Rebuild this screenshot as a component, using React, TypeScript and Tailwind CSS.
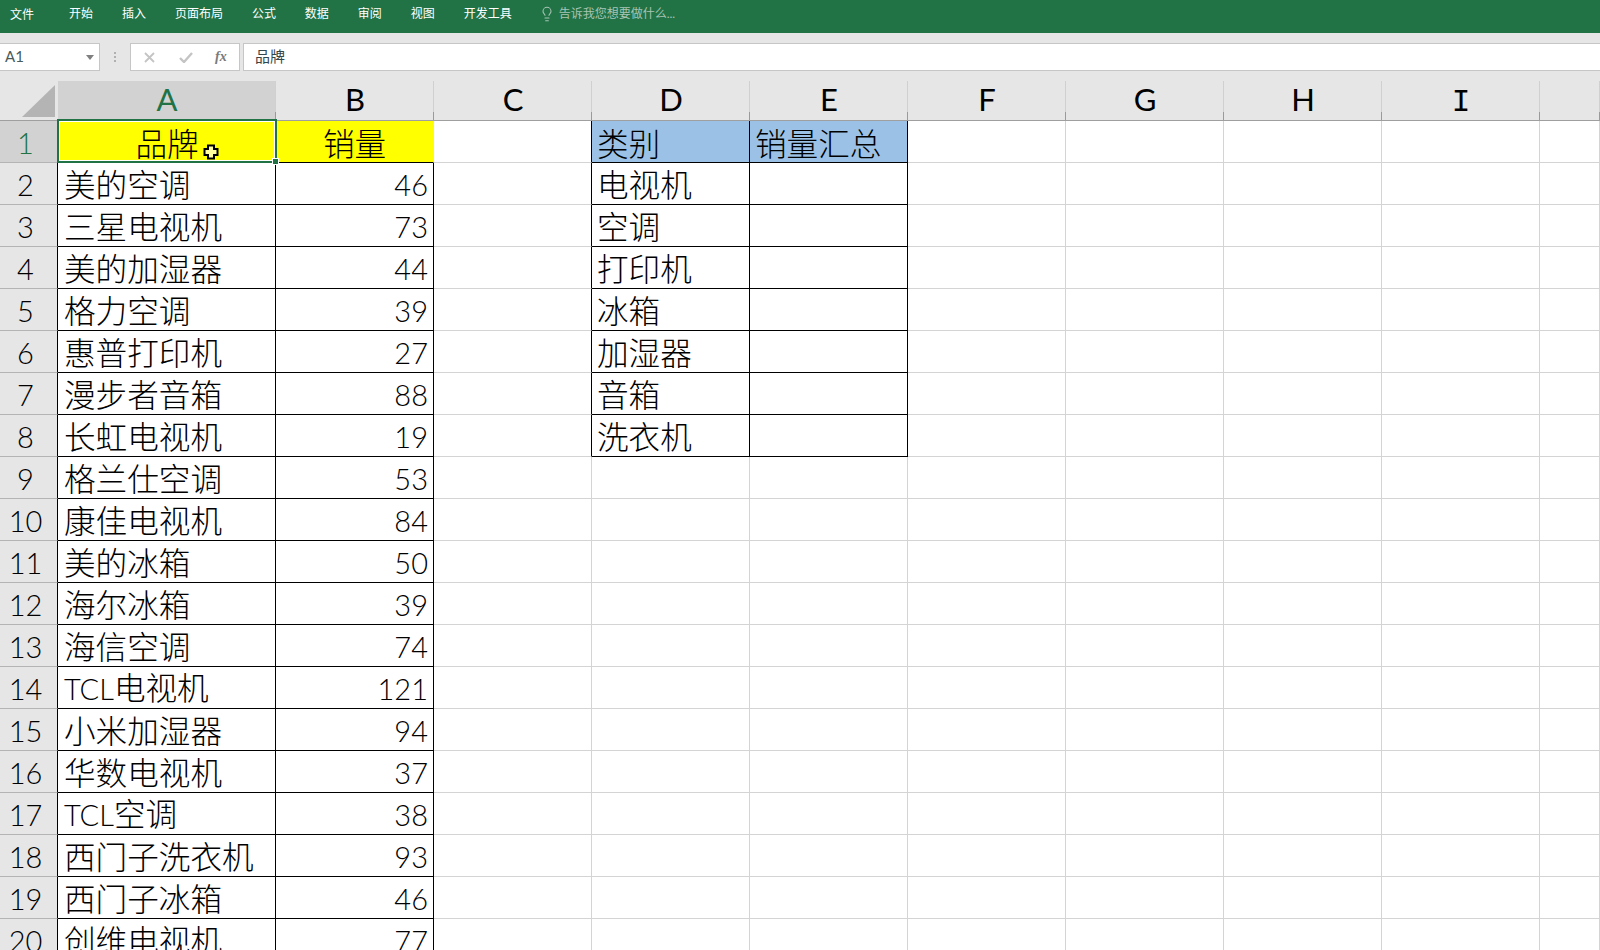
import React from "react";
import { Lightbulb } from "lucide-react";

const menus = ["开始", "插入", "页面布局", "公式", "数据", "审阅", "视图", "开发工具"];
const cols = ["A", "B", "C", "D", "E", "F", "G", "H", "I", ""];
const rowsAB: [string, number][] = [
  ["美的空调", 46], ["三星电视机", 73], ["美的加湿器", 44], ["格力空调", 39], ["惠普打印机", 27],
  ["漫步者音箱", 88], ["长虹电视机", 19], ["格兰仕空调", 53], ["康佳电视机", 84], ["美的冰箱", 50],
  ["海尔冰箱", 39], ["海信空调", 74], ["TCL电视机", 121], ["小米加湿器", 94], ["华数电视机", 37],
  ["TCL空调", 38], ["西门子洗衣机", 93], ["西门子冰箱", 46], ["创维电视机", 77],
];
const cats = ["电视机", "空调", "打印机", "冰箱", "加湿器", "音箱", "洗衣机"];

const txt = "flex items-end overflow-hidden whitespace-nowrap leading-[38px] text-[31.6px] font-light";
const head = "flex items-end whitespace-nowrap leading-[36px] text-[31.6px] font-light";

function Plain({ black }: { black?: boolean }) {
  return <div className={black ? "border-b border-r border-b-[#d4d4d4] border-r-black" : "border-b border-r border-[#d4d4d4]"} />;
}

function Name({ value }: { value: string }) {
  if (value.startsWith("TCL")) {
    return (
      <span>
        <span className="text-[29px]">TCL</span>
        {value.slice(3)}
      </span>
    );
  }
  return <span>{value}</span>;
}

export default function App() {
  return (
    <div className="relative flex h-[950px] w-[1600px] flex-col overflow-hidden bg-white font-['Lato','Noto_Sans_CJK_SC',sans-serif] text-black">
      <div className="flex h-[33px] shrink-0 items-center bg-[#217346] pb-[5px] pl-[10px] text-[12px] leading-[16px] text-white">
        <span className="mr-[35px] mt-[1px]">文件</span>
        <div className="flex gap-[28.95px]">
          {menus.map((m) => <span key={m}>{m}</span>)}
        </div>
        <Lightbulb size={16} strokeWidth={1.6} className="ml-[27px] text-[#a8c4b4]" />
        <span className="ml-[4px] text-[#a8c4b4]">告诉我您想要做什么...</span>
      </div>

      <div className="flex h-[48px] shrink-0 items-start bg-[#e6e6e6] pt-[10px]">
        <div className="flex h-[28px] w-[100px] items-center justify-between border border-l-0 border-[#c6c6c6] bg-white pb-[2px] pl-[5px] pr-[5px] text-[15px] text-[#4a5a5a]">
          <span>A1</span>
          <svg className="mt-[2px]" width="8" height="5" viewBox="0 0 8 5"><path d="M0 0h8L4 5z" fill="#7f7f7f" /></svg>
        </div>
        <div className="flex h-[28px] w-[30px] items-center justify-center">
          <div className="flex flex-col gap-[2px]">
            <i className="block h-[2px] w-[2px] bg-[#b0b0b0]" />
            <i className="block h-[2px] w-[2px] bg-[#b0b0b0]" />
            <i className="block h-[2px] w-[2px] bg-[#b0b0b0]" />
          </div>
        </div>
        <div className="flex h-[28px] w-[110px] items-center border border-[#c6c6c6] bg-white pl-[13px]">
          <svg width="11" height="11" viewBox="0 0 11 11"><path d="M1 1l9 9M10 1l-9 9" stroke="#c4c4c4" strokeWidth="1.8" fill="none" /></svg>
          <svg className="ml-[24px]" width="14" height="11" viewBox="0 0 14 11"><path d="M1 6l4 4 8-9" stroke="#c4c4c4" strokeWidth="2.4" fill="none" /></svg>
          <span className="ml-[22px] font-['Liberation_Serif',serif] text-[14px] font-bold italic leading-none text-[#7a7a7a]">fx</span>
        </div>
        <div className="ml-[3px] flex h-[28px] flex-1 items-center border border-r-0 border-[#c6c6c6] bg-white pb-[2px] pl-[11px] font-['Noto_Sans_CJK_SC',sans-serif] text-[15px] text-[#33464a]">
          品牌
        </div>
      </div>

      <div className="grid flex-1 grid-cols-[58px_218px_158px_158px_158px_158px_158px_158px_158px_158px_60px] grid-rows-[40px] auto-rows-[42px] overflow-hidden">
        <div className="flex items-end justify-end border-b border-[#9f9f9f] bg-[#e6e6e6] pb-[3px] pr-[3px]">
          <svg width="33" height="32" viewBox="0 0 33 32"><path d="M33 0v32H0z" fill="#b4b4b4" /></svg>
        </div>
        {cols.map((c, i) => (
          <div
            key={i}
            className={
              (i === 0 ? "bg-[#d2d2d2] text-[#217346] " : "bg-[#e6e6e6] ") +
              "relative flex items-center justify-center border-b border-[#9f9f9f] pb-[2px] text-[31px] leading-none after:absolute after:bottom-0 after:right-0 after:top-0 after:w-px after:bg-gradient-to-b after:from-[#d0d0d0] after:from-80% after:to-[#9a9a9a] after:to-80%"
            }
          >
            {c === "I" ? <span className="mt-[5px] font-['Liberation_Mono',monospace] text-[31px]">I</span> : c}
          </div>
        ))}

        {/* row 1 */}
        <div className="flex items-center justify-center border-b border-r border-b-[#b4b4b4] border-r-[#217346] bg-[#d2d2d2] pr-[6px] pt-[2px] text-[29px] font-light leading-none text-[#217346]">1</div>
        <div className={head + " relative justify-center border-b border-black bg-[#ffff00]"}>
          <span>品牌</span>
          <div className="absolute -bottom-[1px] -left-[1px] -right-[1px] -top-[2px] z-10 border-2 border-[#217346] shadow-[inset_0_0_0_1px_#ffffff]" />
          <div className="absolute -bottom-[3px] -right-[3px] z-10 h-[7px] w-[7px] border border-white bg-[#217346]" />
        </div>
        <div className={head + " justify-center border-b border-r border-b-black border-r-[#ffff00] bg-[#ffff00]"}>销量</div>
        <Plain black />
        <div className={head + " border-b border-r border-black bg-[#9bc2e6] pl-[5px]"}>类别</div>
        <div className={head + " border-b border-r border-black bg-[#9bc2e6] pl-[5px]"}>销量汇总</div>
        <Plain /><Plain /><Plain /><Plain /><Plain />

        {/* rows 2..20 */}
        {rowsAB.map(([name, val], i) => {
          const cat = cats[i];
          return (
            <React.Fragment key={i}>
              <div className="flex items-center justify-center border-b border-r border-b-[#b4b4b4] border-r-black bg-[#e6e6e6] pr-[6px] pt-[2px] text-[29px] font-light leading-none">{i + 2}</div>
              <div className={txt + " border-b border-r border-black pl-[6px]"}><Name value={name} /></div>
              <div className={txt + " justify-end border-b border-r border-black pr-[5px]"}><span className="text-[29px]">{val}</span></div>
              <Plain black={!!cat} />
              {cat ? <div className={txt + " border-b border-r border-black pl-[5px]"}>{cat}</div> : <Plain />}
              {cat ? <div className="border-b border-r border-black" /> : <Plain />}
              <Plain /><Plain /><Plain /><Plain /><Plain />
            </React.Fragment>
          );
        })}
      </div>

      {/* mouse pointer lying over cell A1 */}
      <svg className="absolute left-[203px] top-[144px] z-20" width="16" height="16" viewBox="0 0 16 16">
        <path d="M5 1.5h6v3.5h3.5v6H11v3.5H5V11H1.5V5H5z" fill="#ffffa0" stroke="#000" strokeWidth="2" />
      </svg>
    </div>
  );
}
